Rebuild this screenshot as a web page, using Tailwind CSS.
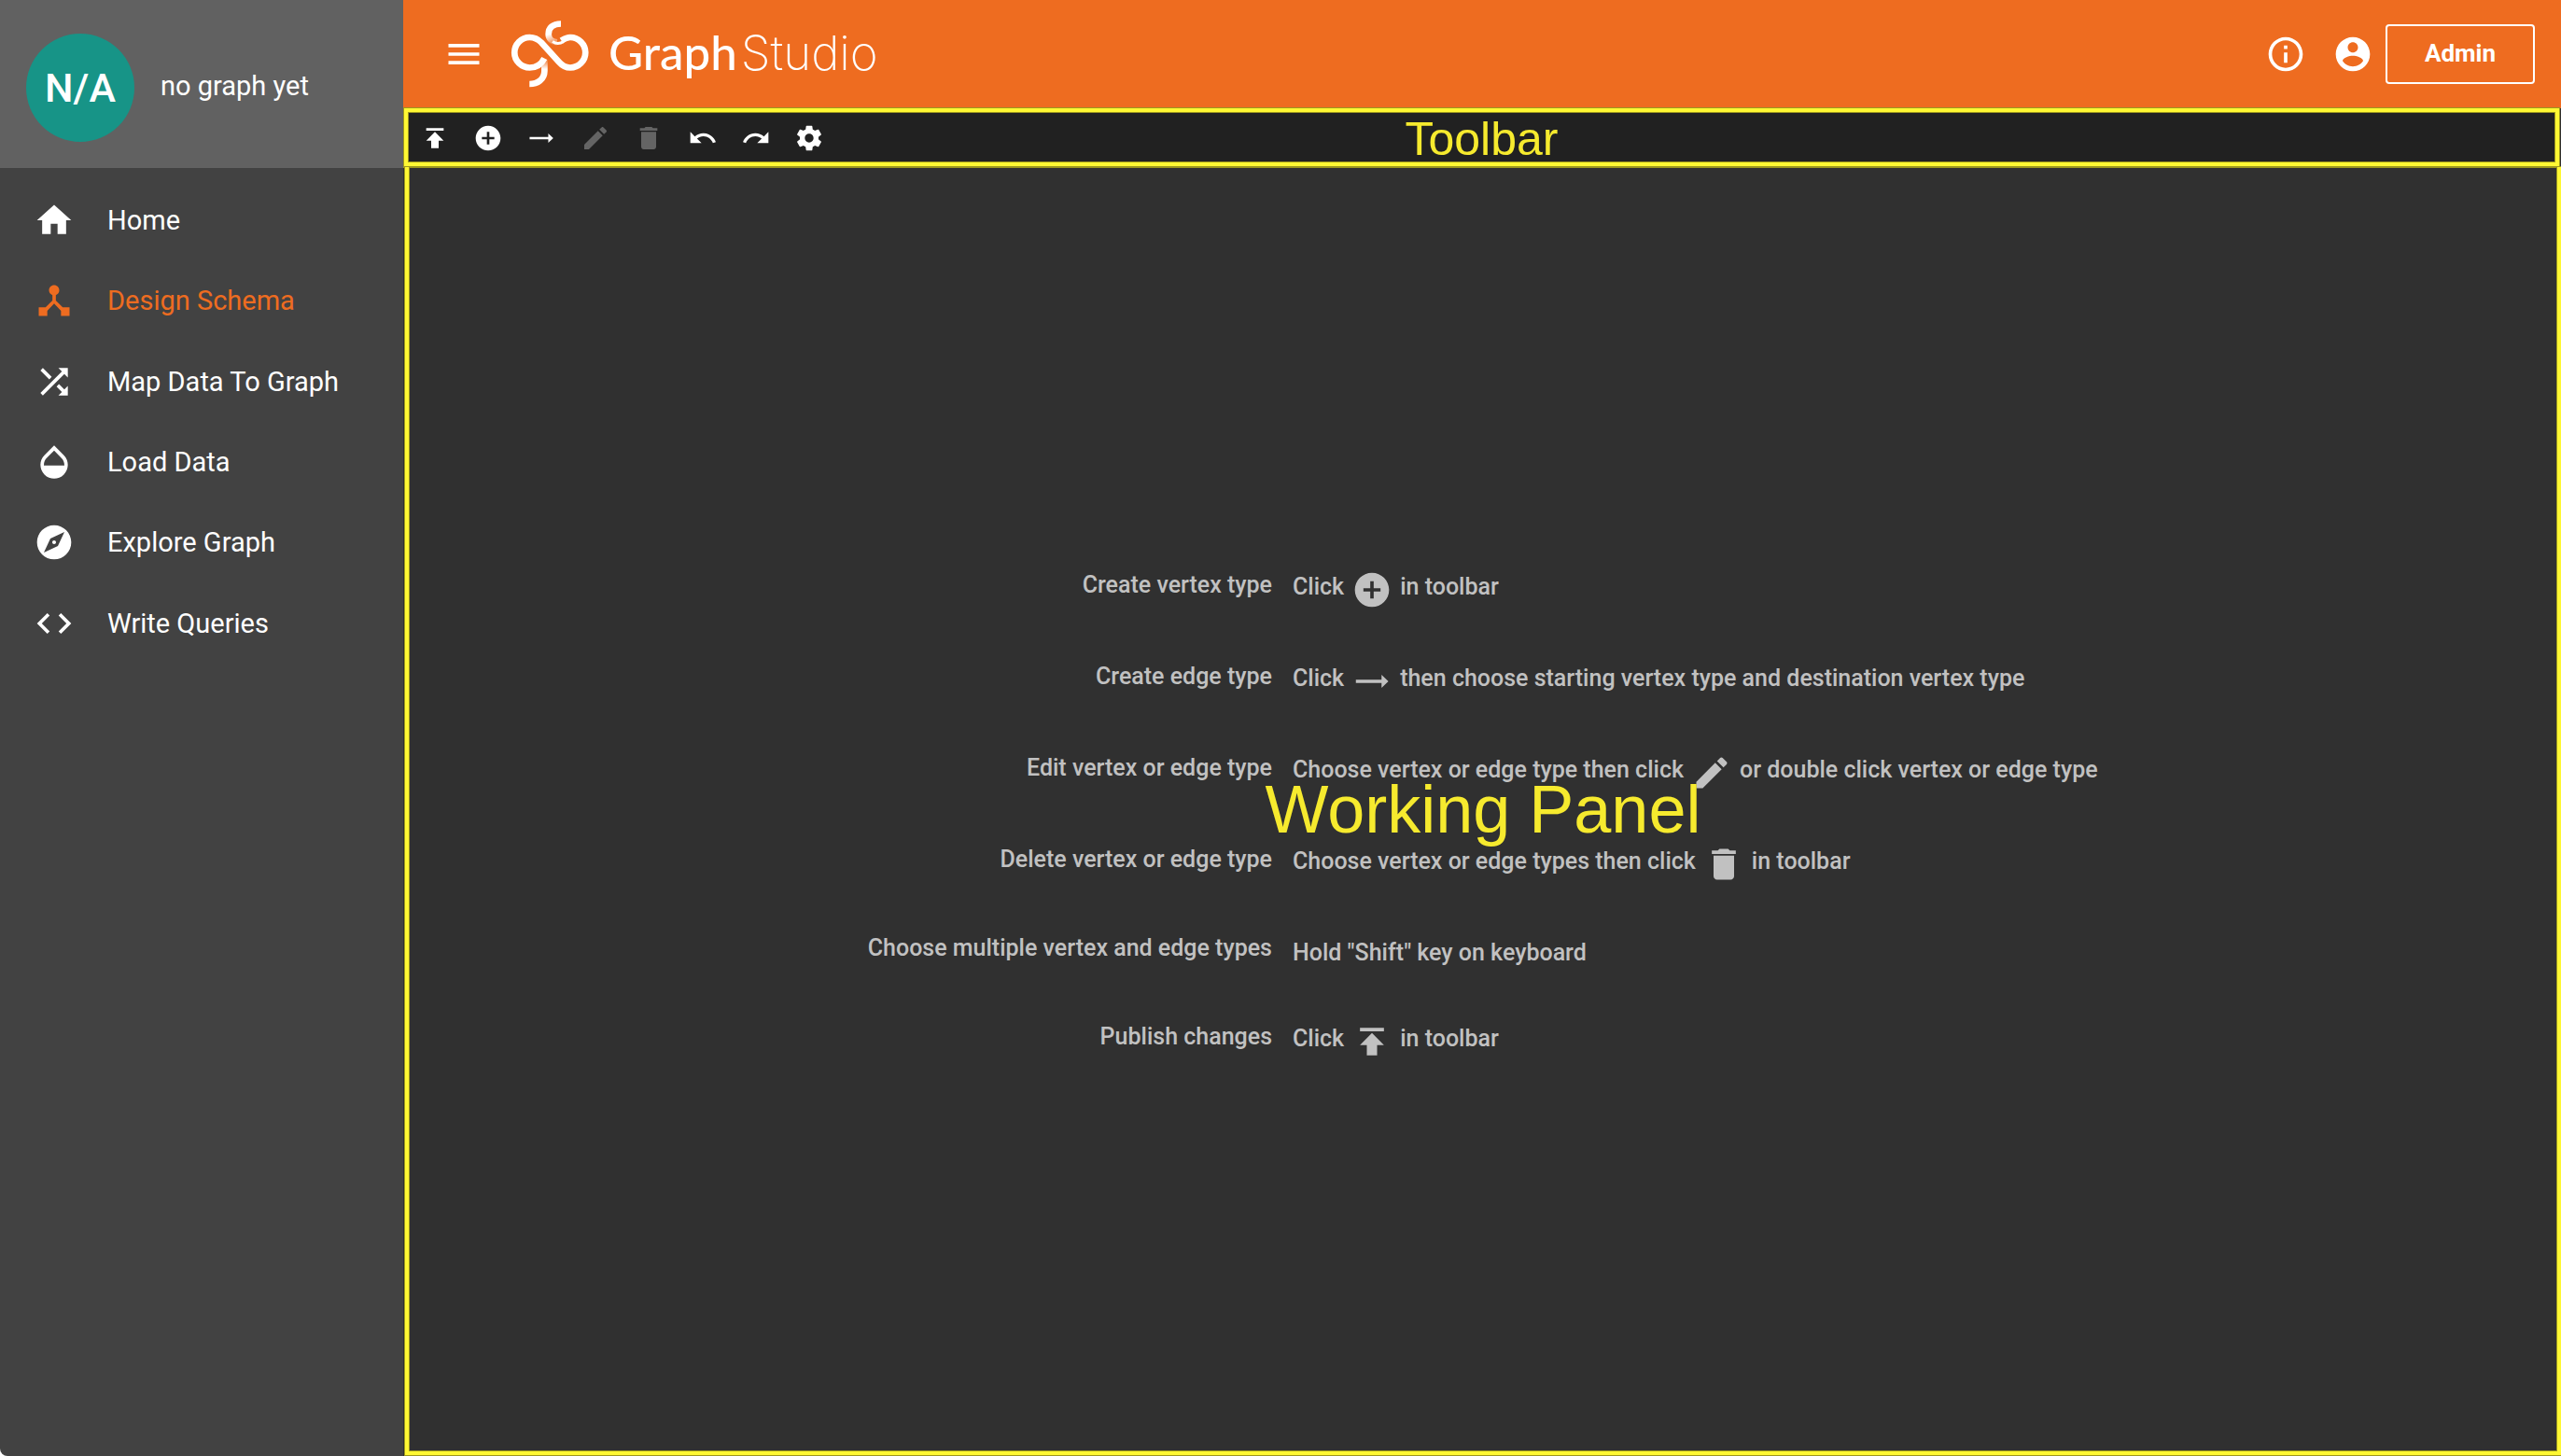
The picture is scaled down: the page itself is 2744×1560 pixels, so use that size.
<!DOCTYPE html>
<html lang="en">
<head>
<meta charset="utf-8">
<title>GraphStudio</title>
<script src="https://cdn.jsdelivr.net/npm/@tailwindcss/browser@4"></script>
</head>
<body class="bg-white font-[Roboto,sans-serif]">
<svg class="hidden" aria-hidden="true">
  <symbol id="publish" viewBox="0 0 24 24"><path d="M5 4v2h14V4H5zm0 10h4v6h6v-6h4l-7-7-7 7z"/></symbol>
  <symbol id="add" viewBox="0 0 24 24"><path d="M12 2C6.48 2 2 6.48 2 12s4.480 10 10 10 10-4.480 10-10S17.520 2 12 2zm5 11h-4v4h-2v-4H7v-2h4V7h2v4h4v2z"/></symbol>
  <symbol id="arrow" viewBox="0 0 24 24"><path d="M2.600 11h15V8.200l4 3.800-4 3.800V13h-15z"/></symbol>
  <symbol id="edit" viewBox="0 0 24 24"><path d="M3 17.250V21h3.750L17.810 9.940l-3.750-3.750L3 17.250zM20.710 7.040c.39-.39.39-1.020 0-1.410l-2.340-2.340c-.39-.39-1.020-.39-1.410 0l-1.830 1.830 3.750 3.750 1.830-1.830z"/></symbol>
  <symbol id="trash" viewBox="0 0 24 24"><path d="M6 19c0 1.100.9 2 2 2h8c1.100 0 2-.9 2-2V7H6v12zM19 4h-3.500l-1-1h-5l-1 1H5v2h14V4z"/></symbol>
</svg>
<div class="flex min-h-screen">
  <aside class="w-[432px] shrink-0 rounded-bl-lg bg-[#424242] text-[29px] leading-8 text-white">
    <div class="flex h-[180px] items-center gap-7 bg-[#616161] px-7 pt-2">
      <div class="flex size-[116px] items-center justify-center rounded-full bg-[#179487] text-[43px] font-medium">N/A</div>
      <span class="pb-1">no graph yet</span>
    </div>
    <nav class="mt-[13px] grid h-[518px] grid-rows-6">
      <a href="#" class="flex items-center gap-[35px] px-9"><svg class="size-11 fill-current" viewBox="0 0 24 24"><path d="M10 20v-6h4v6h5v-8h3L12 3 2 12h3v8z"/></svg>Home</a>
      <a href="#" class="flex items-center gap-[35px] px-9 text-[#ee6c20]"><svg class="size-11 fill-current" viewBox="0 0 24 24"><path d="M17 16l-4-4V8.820C14.160 8.400 15 7.300 15 6c0-1.660-1.340-3-3-3S9 4.340 9 6c0 1.300.84 2.400 2 2.820V12l-4 4H3v5h5v-3.050l4-4.200 4 4.200V21h5v-5h-4z"/></svg>Design Schema</a>
      <a href="#" class="flex items-center gap-[35px] px-9"><svg class="size-11 fill-current" viewBox="0 0 24 24"><path d="M10.590 9.170L5.410 4 4 5.410l5.170 5.170 1.420-1.410zM14.500 4l2.040 2.040L4 18.590 5.410 20 17.960 7.460 20 9.500V4h-5.500zm.33 9.410l-1.410 1.410 3.130 3.130L14.500 20H20v-5.500l-2.040 2.040-3.130-3.130z"/></svg>Map Data To Graph</a>
      <a href="#" class="flex items-center gap-[35px] px-9"><svg class="size-11 fill-current" viewBox="0 0 24 24"><path d="M17.660 8L12 2.350 6.340 8C4.780 9.560 4 11.640 4 13.640s.78 4.110 2.340 5.670 3.610 2.350 5.660 2.350 4.100-.79 5.660-2.350S20 15.640 20 13.640 19.220 9.560 17.660 8zM6 14c.01-2 .62-3.270 1.760-4.400L12 5.270l4.240 4.380C17.380 10.770 17.990 12 18 14H6z"/></svg>Load Data</a>
      <a href="#" class="flex items-center gap-[35px] px-9"><svg class="size-11 fill-current" viewBox="0 0 24 24"><path d="M12 10.900c-.61 0-1.100.49-1.100 1.100s.49 1.100 1.100 1.100c.61 0 1.100-.49 1.100-1.100s-.49-1.100-1.100-1.100zM12 2C6.480 2 2 6.480 2 12s4.480 10 10 10 10-4.480 10-10S17.520 2 12 2zm2.190 12.190L6 18l3.810-8.190L18 6l-3.810 8.190z"/></svg>Explore Graph</a>
      <a href="#" class="flex items-center gap-[35px] px-9"><svg class="size-11 fill-current" viewBox="0 0 24 24"><path d="M9.400 16.600L4.800 12l4.600-4.600L8 6l-6 6 6 6 1.400-1.400zm5.200 0l4.600-4.600-4.600-4.600L16 6l6 6-6 6-1.400-1.400z"/></svg>Write Queries</a>
    </nav>
  </aside>

  <div class="flex min-w-0 flex-1 flex-col bg-[#303030]">
    <header class="flex h-[116px] shrink-0 items-center bg-[#ee6c20] pr-7 pl-[43px] text-white">
      <button aria-label="Menu" class="mr-7"><svg class="size-11 fill-current" viewBox="0 0 24 24"><path d="M3 18h18v-2H3v2zm0-5h18v-2H3v2zm0-7v2h18V6H3z"/></svg></button>
      <svg class="mr-[21px] h-[72px] w-[84px]" viewBox="17 12 84 72" fill="none" stroke-width="6.700">
        <defs>
          <linearGradient id="tail" gradientUnits="userSpaceOnUse" x1="0" y1="54" x2="0" y2="64"><stop offset="0" stop-color="#fff" stop-opacity=".1"/><stop offset="1" stop-color="#fff"/></linearGradient>
          <linearGradient id="hook" gradientUnits="userSpaceOnUse" x1="60" y1="26" x2="64" y2="37"><stop offset="0" stop-color="#fff"/><stop offset="1" stop-color="#fff" stop-opacity=".15"/></linearGradient>
        </defs>
        <path stroke="url(#hook)" d="M71 15.500C62 15.500 57.700 20 57.700 26.500C57.700 31 61 35 67 35.300"/>
        <path stroke="url(#tail)" d="M53.400 54V66C53.400 75 46 80 37.300 80"/>
        <path stroke="#fff" d="M53.300 52.500C50 59 44.500 62.500 37.500 62.500A16.200 16.200 0 0 1 37.500 30C43 30 46.500 32 50 35.500L69 56.500C72.500 60.500 76 62.500 81 62.500A16.200 16.200 0 0 0 81 30C76.500 30 74 32 71.500 33.600"/>
        <path stroke="#fff" stroke-width="3" d="M62 34.500C66 37.500 70 37 74 34.500"/>
      </svg>
      <div class="flex items-baseline gap-1 pb-1 leading-[60px]"><span class="font-[Lato,sans-serif] text-[51px] font-medium">Graph</span><span class="font-[Inter,sans-serif] text-[51px] font-extralight">Studio</span></div>
      <div class="ml-auto flex items-center">
        <button aria-label="Information" class="mr-7"><svg class="size-11 fill-current" viewBox="0 0 24 24"><path d="M11 17h2v-6h-2v6zm1-15C6.480 2 2 6.480 2 12s4.480 10 10 10 10-4.480 10-10S17.520 2 12 2zm0 18c-4.410 0-8-3.590-8-8s3.590-8 8-8 8 3.590 8 8-3.590 8-8 8zM11 9h2V7h-2v2z"/></svg></button>
        <button aria-label="Account" class="mr-[13px]"><svg class="size-11 fill-current" viewBox="0 0 24 24"><path d="M12 2C6.480 2 2 6.480 2 12s4.480 10 10 10 10-4.480 10-10S17.520 2 12 2zm0 3c1.660 0 3 1.340 3 3s-1.340 3-3 3-3-1.340-3-3 1.340-3 3-3zm0 14.200c-2.500 0-4.710-1.280-6-3.220.03-1.990 4-3.080 6-3.080 1.990 0 5.970 1.090 6 3.080-1.290 1.940-3.500 3.220-6 3.220z"/></svg></button>
        <button class="h-16 w-40 rounded border-2 border-white pb-[2px] text-[26px] leading-8 font-bold">Admin</button>
      </div>
    </header>

    <div class="relative mr-[2px] ml-px h-[63px] shrink-0 border-4 border-b-5 border-[#fff833] bg-[#212121] shadow-[0_0_0_1px_#9c971f,inset_0_0_0_1px_#9c971f]">
      <div class="grid h-full w-[459px] grid-cols-8 items-center justify-items-center pt-[2px] text-white">
        <button aria-label="Publish"><svg class="size-8 fill-current"><use href="#publish"/></svg></button>
        <button aria-label="Add vertex type"><svg class="size-8 fill-current"><use href="#add"/></svg></button>
        <button aria-label="Add edge type"><svg class="size-8 fill-current"><use href="#arrow"/></svg></button>
        <button aria-label="Edit" class="text-[#646464]" disabled><svg class="size-8 fill-current"><use href="#edit"/></svg></button>
        <button aria-label="Delete" class="text-[#646464]" disabled><svg class="size-8 fill-current"><use href="#trash"/></svg></button>
        <button aria-label="Undo"><svg class="size-8 fill-current" viewBox="0 0 24 24"><path d="M12.500 8c-2.650 0-5.050.99-6.900 2.600L2 7v9h9l-3.620-3.620c1.390-1.160 3.160-1.880 5.120-1.880 3.540 0 6.550 2.310 7.600 5.500l2.370-.78C21.080 11.030 17.150 8 12.500 8z"/></svg></button>
        <button aria-label="Redo"><svg class="size-8 fill-current" viewBox="0 0 24 24"><path d="M18.400 10.600C16.550 8.990 14.150 8 11.500 8c-4.650 0-8.580 3.030-9.960 7.220L3.900 16c1.050-3.190 4.050-5.500 7.600-5.500 1.950 0 3.730.72 5.120 1.880L13 16h9V7l-3.600 3.600z"/></svg></button>
        <button aria-label="Settings"><svg class="size-8 fill-current" viewBox="0 0 24 24"><path d="M19.430 12.980c.04-.32.07-.64.07-.98s-.03-.66-.07-.98l2.110-1.650c.19-.15.24-.42.12-.64l-2-3.460c-.12-.22-.39-.3-.61-.22l-2.490 1c-.52-.4-1.080-.73-1.690-.98l-.38-2.650C14.460 2.180 14.250 2 14 2h-4c-.25 0-.46.18-.49.42l-.38 2.650c-.61.25-1.170.59-1.690.98l-2.490-1c-.23-.09-.49 0-.61.22l-2 3.460c-.13.22-.07.49.12.64l2.110 1.650c-.04.32-.07.65-.07.98s.03.66.07.98l-2.110 1.650c-.19.15-.24.42-.12.64l2 3.460c.12.22.39.3.61.22l2.490-1c.52.4 1.080.73 1.690.98l.38 2.650c.03.24.24.42.49.42h4c.25 0 .46-.18.49-.42l.38-2.650c.61-.25 1.170-.59 1.690-.98l2.490 1c.23.09.49 0 .61-.22l2-3.460c.12-.22.07-.49-.12-.64l-2.110-1.650zM12 15.500c-1.930 0-3.500-1.570-3.500-3.500s1.570-3.500 3.500-3.500 3.500 1.570 3.500 3.500-1.570 3.500-3.500 3.500z"/></svg></button>
      </div>
      <div class="pointer-events-none absolute inset-0 flex items-center justify-center pt-1 font-['Liberation_Sans',sans-serif] text-[50px] leading-none text-[#f6ea2e]">Toolbar</div>
    </div>

    <main class="relative mb-px ml-[2px] flex flex-1 flex-col justify-center border-4 border-t-0 border-[#fff833] shadow-[0_0_0_1px_#9c971f,inset_0_0_0_1px_#9c971f]">
      <div class="mt-1 grid grid-cols-[925px_1fr] gap-x-[22px] text-[25px] font-medium text-[#c1c1c1]">
        <div class="flex h-[98px] items-center justify-end">Create vertex type</div>
        <div class="flex items-start gap-2 pt-8 leading-[38px]">Click<svg class="size-11 fill-current"><use href="#add"/></svg>in toolbar</div>
        <div class="flex h-[98px] items-center justify-end">Create edge type</div>
        <div class="flex items-start gap-2 pt-8 leading-[38px]">Click<svg class="size-11 fill-current"><use href="#arrow"/></svg>then choose starting vertex type and destination vertex type</div>
        <div class="flex h-[98px] items-center justify-end">Edit vertex or edge type</div>
        <div class="flex items-start gap-2 pt-8 leading-[38px]">Choose vertex or edge type then click<svg class="size-11 fill-current"><use href="#edit"/></svg>or double click vertex or edge type</div>
        <div class="flex h-[98px] items-center justify-end">Delete vertex or edge type</div>
        <div class="flex items-start gap-2 pt-8 leading-[38px]">Choose vertex or edge types then click<svg class="size-11 fill-current"><use href="#trash"/></svg>in toolbar</div>
        <div class="flex h-[92px] items-center justify-end">Choose multiple vertex and edge types</div>
        <div class="flex items-start pt-8 leading-[38px]">Hold "Shift" key on keyboard</div>
        <div class="flex h-[98px] items-center justify-end">Publish changes</div>
        <div class="flex items-start gap-2 pt-8 leading-[38px]">Click<svg class="size-11 fill-current"><use href="#publish"/></svg>in toolbar</div>
      </div>
      <div class="pointer-events-none absolute inset-0 flex items-center justify-center font-['Liberation_Sans',sans-serif] text-[72px] leading-none text-[#f6ea2e]">Working Panel</div>
    </main>
  </div>
</div>
</body>
</html>
